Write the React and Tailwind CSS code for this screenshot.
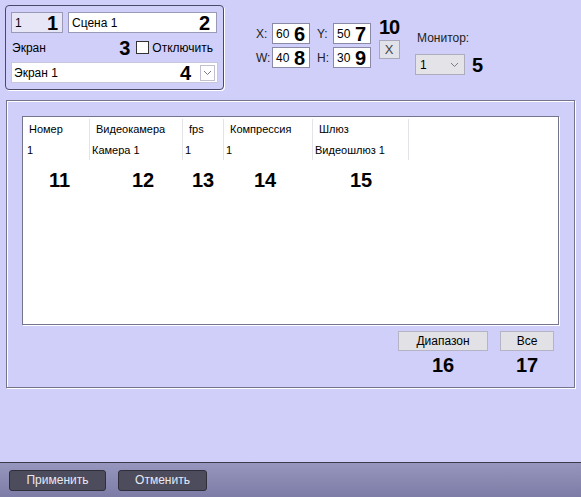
import React from 'react';

const font = { fontFamily: '"Liberation Sans", Arial, sans-serif' };

function Num({ children, className = '' }) {
    return (
        <span className={`font-bold text-[20px] leading-none text-black ${className}`}>{children}</span>
    );
}

function Chevron() {
    return (
        <svg width="9" height="6" viewBox="0 0 9 6" fill="none">
            <path d="M1 1l3.5 3.5L8 1" stroke="#7a7a8a" strokeWidth="1" />
        </svg>
    );
}

export default function App() {
    const columns = [
        { title: 'Номер', value: '1', w: 'w-[67px]', pl: 'pl-[4px]' },
        { title: 'Видеокамера', value: 'Камера 1', w: 'w-[93px]', pl: 'pl-[2px]' },
        { title: 'fps', value: '1', w: 'w-[41px]', pl: 'pl-[2px]' },
        { title: 'Компрессия', value: '1', w: 'w-[89px]', pl: 'pl-[2px]' },
        { title: 'Шлюз', value: 'Видеошлюз 1', w: 'w-[96px]', pl: 'pl-[2px]' },
    ];

    return (
        <div className="w-[581px] h-[497px] bg-[#cfcff9] flex flex-col text-[12px] text-black overflow-hidden" style={font}>
            {/* top area */}
            <div className="h-[100px] flex items-start pl-[5px] pt-[5px]">
                <div className="w-[219px] h-[85px] border border-[#4a4a68] rounded-[4px] shadow-[1px_1px_0_#ffffff] px-[5px] pt-[6px] flex flex-col">
                    <div className="flex gap-[5px]">
                        <div className="w-[52px] h-[21px] bg-[#e6e6f6] border border-[#9a9ab8] flex items-center justify-between pl-[3px] pr-[4px]">
                            <span>1</span>
                            <Num>1</Num>
                        </div>
                        <div className="w-[149px] h-[21px] bg-white border border-[#9a9ab8] flex items-center justify-between pl-[3px] pr-[6px]">
                            <span>Сцена 1</span>
                            <Num>2</Num>
                        </div>
                    </div>
                    <div className="flex items-center h-[29px] pl-[1px]">
                        <span>Экран</span>
                        <Num className="ml-auto mr-[6px]">3</Num>
                        <span className="w-[13px] h-[13px] bg-white border border-[#333] mr-[3px]"></span>
                        <span className="pr-[5px]">Отключить</span>
                    </div>
                    <div className="w-[207px] h-[21px] bg-white border border-[#c8c8dc] flex items-center pl-[2px] pr-[2px]">
                        <span>Экран 1</span>
                        <Num className="ml-auto mr-[9px]">4</Num>
                        <span className="w-[15px] h-[16px] bg-white border border-[#c0c0d0] flex items-center justify-center">
                            <Chevron />
                        </span>
                    </div>
                </div>

                <div className="ml-[32px] mt-[18px] flex flex-col gap-[3px]">
                    {[
                        [['X:', '60', '6'], ['Y:', '50', '7']],
                        [['W:', '40', '8'], ['H:', '30', '9']],
                    ].map((row, i) => (
                        <div key={i} className="flex items-center">
                            {row.map(([label, val, n], j) => (
                                <div key={j} className={`flex items-center ${j === 1 ? 'ml-[7px]' : ''}`}>
                                    <span className="w-[16px] text-[#222]">{label}</span>
                                    <div className="w-[38px] h-[21px] bg-white border border-[#8a8aa8] flex items-center justify-between pl-[3px] pr-[4px]">
                                        <span>{val}</span>
                                        <Num>{n}</Num>
                                    </div>
                                </div>
                            ))}
                        </div>
                    ))}
                </div>

                <div className="ml-[7px] mt-[12px] flex flex-col items-center w-[22px]">
                    <Num className="tracking-[-1px]">10</Num>
                    <button className="mt-[3px] w-[21px] h-[19px] bg-[#e2e2ea] border border-[#a8a8b8] flex items-center justify-center text-[13px] font-light text-[#444] leading-none">
                        X
                    </button>
                </div>

                <div className="ml-[15px] mt-[24px] flex flex-col">
                    <span className="pl-[2px] text-[#222]">Монитор:</span>
                    <div className="flex items-center mt-[7px]">
                        <div className="w-[50px] h-[21px] bg-[#e4e4e8] border border-[#acacbc] flex items-center justify-between pl-[4px] pr-[5px]">
                            <span>1</span>
                            <Chevron />
                        </div>
                        <Num className="ml-[7px]">5</Num>
                    </div>
                </div>
            </div>

            {/* group box */}
            <div className="mx-[6px] h-[288px] border border-[#74748c] shadow-[1px_1px_0_#ffffff] ">
                <div className="h-full shadow-[inset_1px_1px_0_#ffffff] pt-[15px] px-[15px] flex flex-col">
                    <div className="h-[209px] bg-white border border-[#74748c] shadow-[1px_1px_0_#ffffff] pt-[2px]">
                        <div className="flex">
                            {columns.map((c) => (
                                <div key={c.title} className={`${c.w} border-r border-[#e4e4e8] text-[11px]`}>
                                    <div className="h-[21px] pl-[6px] flex items-center">{c.title}</div>
                                    <div className={`h-[20px] ${c.pl} flex items-center`}>{c.value}</div>
                                </div>
                            ))}
                        </div>
                        <div className="relative h-[40px]">
                            <Num className="absolute left-[26px] top-[10px]">11</Num>
                            <Num className="absolute left-[109px] top-[10px]">12</Num>
                            <Num className="absolute left-[169px] top-[10px]">13</Num>
                            <Num className="absolute left-[231px] top-[10px]">14</Num>
                            <Num className="absolute left-[327px] top-[10px]">15</Num>
                        </div>
                    </div>
                    <div className="flex justify-end gap-[12px] mt-[6px] pr-[5px]">
                        <div className="flex flex-col items-center">
                            <button className="w-[90px] h-[20px] bg-[#e1e1e6] border border-[#b4b4c4] text-[12px]">Диапазон</button>
                            <Num className="mt-[4px]">16</Num>
                        </div>
                        <div className="flex flex-col items-center">
                            <button className="w-[54px] h-[20px] bg-[#e1e1e6] border border-[#b4b4c4] text-[12px]">Все</button>
                            <Num className="mt-[4px]">17</Num>
                        </div>
                    </div>
                </div>
            </div>

            <div className="flex-1"></div>

            {/* bottom bar */}
            <div className="h-[35px] border-t border-[#3a3a48] bg-gradient-to-b from-[#9696be] to-[#7c7ca6] flex items-center pl-[9px] gap-[12px]">
                <button className="w-[97px] h-[21px] rounded-[3px] bg-[#4c4c5c] border border-[#2f2f3c] text-[#e8e8f2] text-[12px]">Применить</button>
                <button className="w-[89px] h-[21px] rounded-[3px] bg-[#4c4c5c] border border-[#2f2f3c] text-[#e8e8f2] text-[12px]">Отменить</button>
            </div>
        </div>
    );
}
